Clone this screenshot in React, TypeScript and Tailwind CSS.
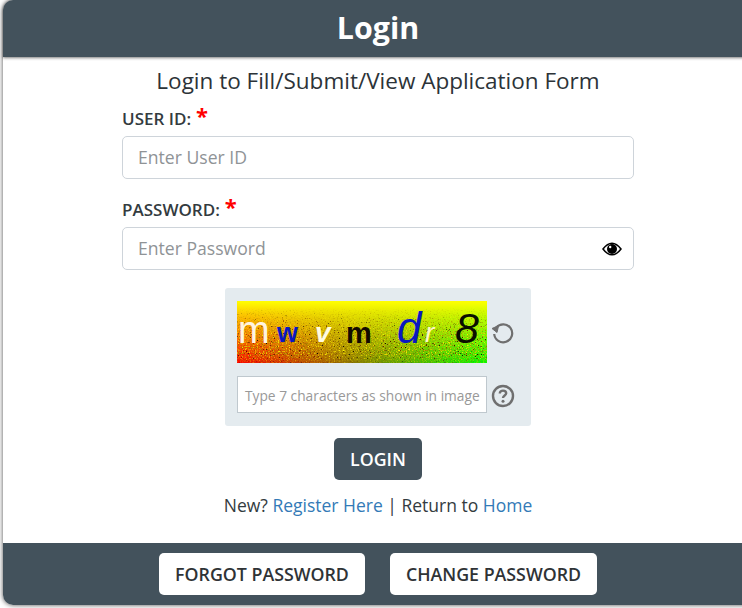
import React from "react";

function Captcha() {
  return (
    <div className="relative w-[250px] h-[62px] overflow-hidden bg-[linear-gradient(to_bottom,#ffff00_0%,rgba(255,255,0,0)_100%),linear-gradient(to_right,#ff0000,#00ff00)] font-['Liberation_Sans',sans-serif]">
      <svg className="absolute inset-0 w-full h-full" width="250" height="62">
        <filter id="captcha-noise" x="0" y="0" width="100%" height="100%">
          <feTurbulence type="fractalNoise" baseFrequency="0.75" numOctaves="2" seed="7" />
          <feColorMatrix values="2.4 0 0 0 -0.6  2.2 0 0 0 -0.65  0 0 0 0 0  0 3.4 0 0 -1.4" />
        </filter>
        <defs>
          <linearGradient id="noise-fade" x1="0" y1="0" x2="0" y2="1">
            <stop offset="0.1" stopColor="#000" />
            <stop offset="0.5" stopColor="#ccc" />
            <stop offset="0.85" stopColor="#eee" />
            <stop offset="1" stopColor="#555" />
          </linearGradient>
          <mask id="noise-mask">
            <rect width="250" height="62" fill="url(#noise-fade)" />
          </mask>
        </defs>
        <rect width="250" height="62" filter="url(#captcha-noise)" mask="url(#noise-mask)" />
      </svg>
      <span className="absolute left-[1px] top-[10px] text-[38px] leading-[38px] text-[#fff4e0]">m</span>
      <span className="absolute left-[40px] top-[18px] text-[27px] leading-[28px] font-bold text-[#0a18c0]">w</span>
      <span className="absolute left-[78px] top-[18px] text-[28px] leading-[28px] font-bold italic text-[#fffbe0]">v</span>
      <span className="absolute left-[109px] top-[18px] text-[29px] leading-[29px] font-bold text-[#120a00]">m</span>
      <span className="absolute left-[160px] top-[3px] text-[44px] leading-[48px] italic text-[#0a18c0]">d</span>
      <span className="absolute left-[188px] top-[18px] text-[28px] leading-[28px] italic text-[#fff6c8]">r</span>
      <span className="absolute left-[218px] top-[3px] text-[43px] leading-[48px] italic text-[#0a0f00]">8</span>
    </div>
  );
}

function Eye() {
  return (
    <svg width="20" height="14" viewBox="0 0 20 14" aria-hidden="true">
      <path d="M1 7C4 3 7 1.2 10 1.2S16 3 19 7C16 11 13 12.8 10 12.8S4 11 1 7Z" fill="#fff" stroke="#000" strokeWidth="1.5" />
      <circle cx="10" cy="7" r="5" fill="#000" />
      <circle cx="8.2" cy="5" r="1.2" fill="#fff" />
    </svg>
  );
}

function Refresh() {
  return (
    <svg width="26" height="26" viewBox="0 0 26 26" fill="none" stroke="#6f6f6f" strokeWidth="2.2" aria-hidden="true">
      <path d="M6.3 8.5A9 9 0 1 1 4.2 15" />
      <path d="M2 9.5L7 13.5L8.6 6.6Z" fill="#6f6f6f" strokeWidth="1" strokeLinejoin="round" />
    </svg>
  );
}

function Help() {
  return (
    <svg width="24" height="24" viewBox="0 0 24 24" fill="none" aria-hidden="true" className="mt-[2px]">
      <circle cx="12" cy="12" r="10" stroke="#6f6f6f" strokeWidth="2.4" />
      <path d="M8.8 9.6C8.8 7.7 10.2 6.6 12 6.6S15.2 7.7 15.2 9.3C15.2 11.4 12 11.6 12 14" stroke="#6f6f6f" strokeWidth="2.4" />
      <circle cx="12" cy="17.2" r="1.5" fill="#6f6f6f" />
    </svg>
  );
}

function Req() {
  return <span className="text-[#ff0000] text-[22px] leading-[16px] font-bold ml-[5px] inline-block align-top">*</span>;
}

export default function App() {
  return (
    <div className="w-[742px] h-[608px] overflow-hidden bg-white font-['Open_Sans',sans-serif] text-[#212529]">
      <div className="ml-[3px] w-[760px] h-[605px] flex flex-col rounded-[10px] bg-white shadow-[0_0_5px_rgba(0,0,0,0.7)]">
        <div className="h-[57px] shrink-0 rounded-t-[10px] bg-[#43525c] shadow-[0_1px_3px_rgba(0,0,0,0.5)]">
          <div className="w-[750px] text-center text-white text-[30.4px] leading-[55px] font-bold">Login</div>
        </div>
        <div className="flex-1 w-[750px] flex flex-col">
          <h1 className="mt-[8px] text-center text-[22.5px] leading-[32px] font-normal text-[#2c3338]">Login to Fill/Submit/View Application Form</h1>
          <div className="ml-[119px] w-[512px] mt-[10px]">
            <label className="block h-[29px] text-[17px] leading-[24px] font-semibold text-[#333b40]">USER ID:<Req /></label>
            <div className="h-[43px] rounded-[5px] border border-[#ced4da] pl-[15px] flex items-center text-[17.6px] text-[#8f9396]">Enter User ID</div>
            <label className="block mt-[19px] h-[29px] text-[17px] leading-[24px] font-semibold text-[#333b40]">PASSWORD:<Req /></label>
            <div className="h-[43px] rounded-[5px] border border-[#ced4da] pl-[15px] pr-[11px] flex items-center justify-between text-[17.6px] text-[#8f9396]">
              <span>Enter Password</span>
              <Eye />
            </div>
          </div>
          <div className="mt-[18px] ml-[222px] w-[306px] h-[138px] rounded-[3px] bg-[#e4ebef] pl-[12px] pt-[13px]">
            <div className="flex items-center gap-[3px]">
              <Captcha />
              <Refresh />
            </div>
            <div className="mt-[13px] flex items-center gap-[4px]">
              <div className="w-[250px] h-[37px] bg-white border border-[#bfc8ce] pl-[7px] pt-[3px] flex items-center text-[13.75px] text-[#999999] whitespace-nowrap">Type 7 characters as shown in image</div>
              <Help />
            </div>
          </div>
          <button className="mt-[12px] mx-auto w-[88px] h-[42px] rounded-[5px] bg-[#43525c] text-white text-[17.8px] font-semibold">LOGIN</button>
          <p className="mt-[12px] text-center text-[17.5px] leading-[26px] text-[#333b40]">
            New? <span className="text-[#337ab7]">Register Here</span> | Return to <span className="text-[#337ab7]">Home</span>
          </p>
        </div>
        <div className="h-[62px] shrink-0 mt-auto rounded-b-[10px] bg-[#43525c]">
          <div className="w-[750px] h-full flex items-center justify-center gap-[25px]">
            <div className="h-[42px] w-[206px] rounded-[5px] bg-white flex items-center justify-center text-[17.8px] font-semibold text-[#2f3336]">FORGOT PASSWORD</div>
            <div className="h-[42px] w-[207px] rounded-[5px] bg-white flex items-center justify-center text-[17.8px] font-semibold text-[#2f3336]">CHANGE PASSWORD</div>
          </div>
        </div>
      </div>
    </div>
  );
}
